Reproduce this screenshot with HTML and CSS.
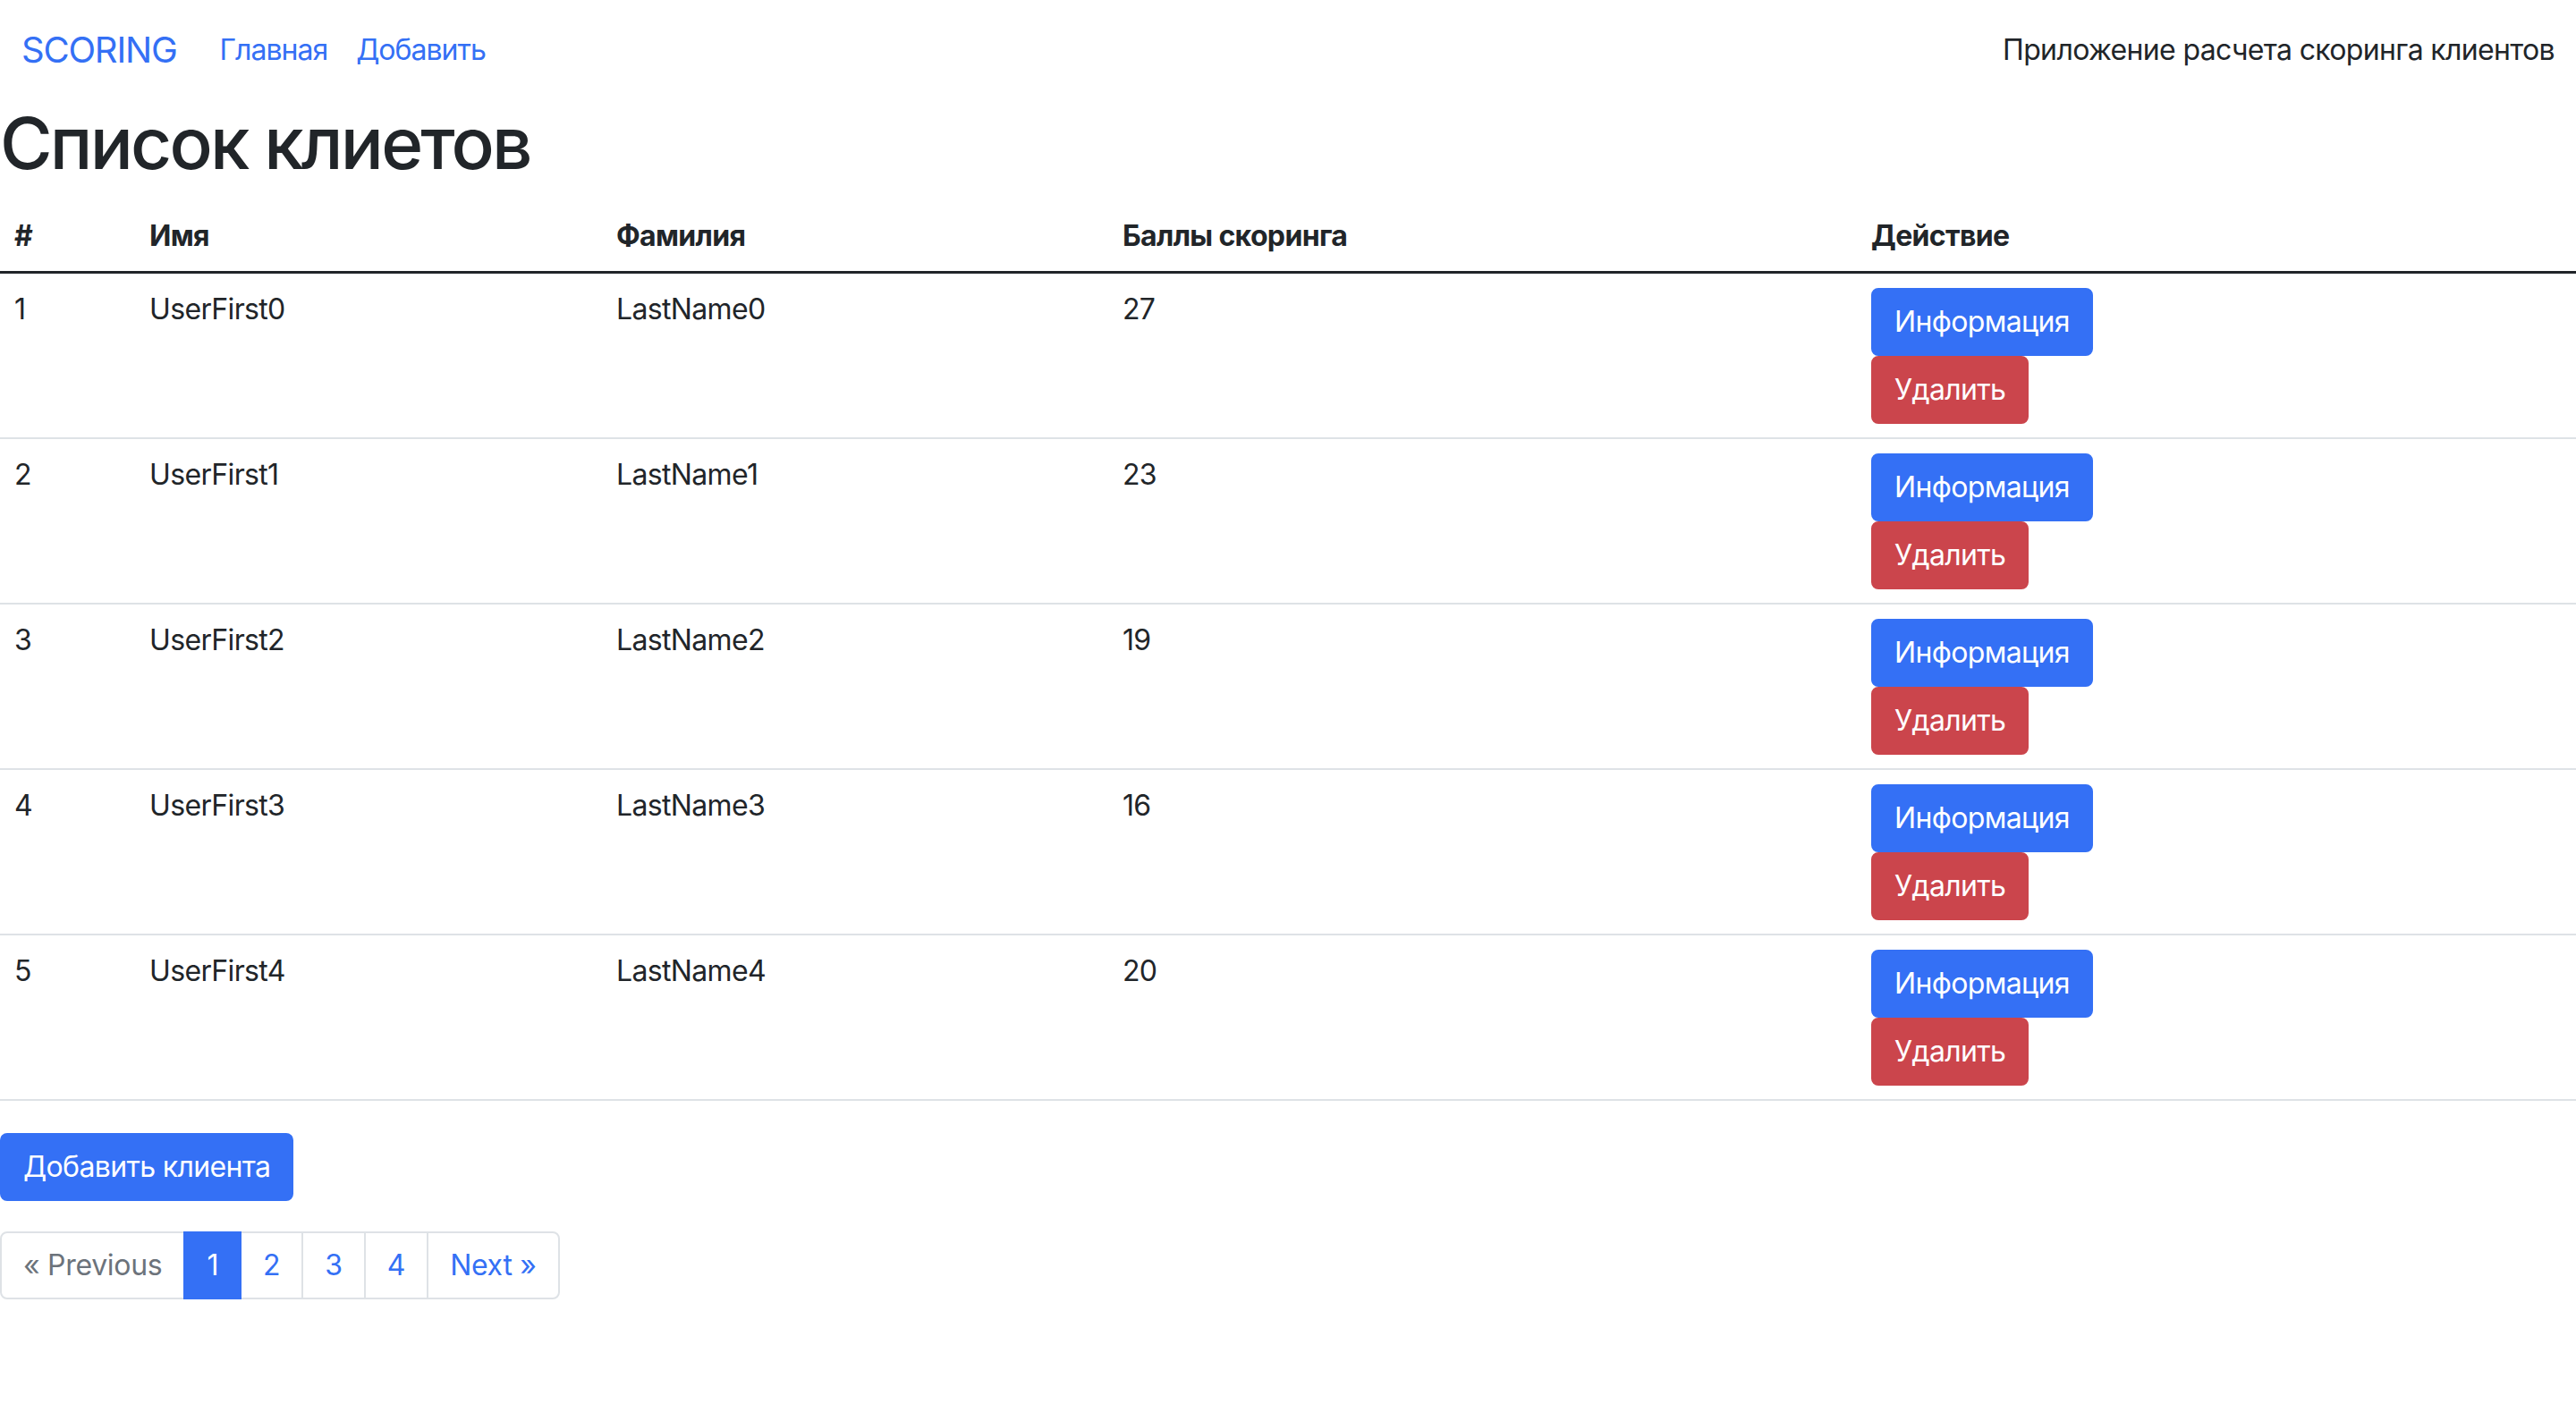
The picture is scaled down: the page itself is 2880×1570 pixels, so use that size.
FILE: index.html
```html
<!DOCTYPE html>
<html lang="ru">
<head>
<meta charset="utf-8">
<title>Scoring</title>
<link rel="stylesheet" href="styles.css">
</head>
<body>
<nav class="navbar">
  <div class="navbar-inner">
    <div class="navbar-left">
      <a class="brand" href="#">SCORING</a>
      <ul class="nav">
        <li><a class="nav-link" href="#">Главная</a></li>
        <li><a class="nav-link" href="#">Добавить</a></li>
      </ul>
    </div>
    <span class="navbar-text">Приложение расчета скоринга клиентов</span>
  </div>
</nav>

<h1 class="title">Список клиетов</h1>

<table class="table">
  <thead>
    <tr>
      <th class="col-num">#</th>
      <th class="col-first">Имя</th>
      <th class="col-last">Фамилия</th>
      <th class="col-score">Баллы скоринга</th>
      <th class="col-action">Действие</th>
    </tr>
  </thead>
  <tbody>
    <tr>
      <td>1</td><td>UserFirst0</td><td>LastName0</td><td>27</td>
      <td><div class="actions"><a class="btn btn-primary" href="#">Информация</a><a class="btn btn-danger" href="#">Удалить</a></div></td>
    </tr>
    <tr>
      <td>2</td><td>UserFirst1</td><td>LastName1</td><td>23</td>
      <td><div class="actions"><a class="btn btn-primary" href="#">Информация</a><a class="btn btn-danger" href="#">Удалить</a></div></td>
    </tr>
    <tr>
      <td>3</td><td>UserFirst2</td><td>LastName2</td><td>19</td>
      <td><div class="actions"><a class="btn btn-primary" href="#">Информация</a><a class="btn btn-danger" href="#">Удалить</a></div></td>
    </tr>
    <tr>
      <td>4</td><td>UserFirst3</td><td>LastName3</td><td>16</td>
      <td><div class="actions"><a class="btn btn-primary" href="#">Информация</a><a class="btn btn-danger" href="#">Удалить</a></div></td>
    </tr>
    <tr>
      <td>5</td><td>UserFirst4</td><td>LastName4</td><td>20</td>
      <td><div class="actions"><a class="btn btn-primary" href="#">Информация</a><a class="btn btn-danger" href="#">Удалить</a></div></td>
    </tr>
  </tbody>
</table>

<div class="add-row"><a class="btn btn-primary" href="#">Добавить клиента</a></div>

<ul class="pagination">
  <li class="page-item disabled"><span class="page-link">« Previous</span></li>
  <li class="page-item active"><span class="page-link">1</span></li>
  <li class="page-item"><a class="page-link" href="#">2</a></li>
  <li class="page-item"><a class="page-link" href="#">3</a></li>
  <li class="page-item"><a class="page-link" href="#">4</a></li>
  <li class="page-item"><a class="page-link" href="#">Next »</a></li>
</ul>
</body>
</html>
```

FILE: styles.css
```css
* { box-sizing: border-box; }

html, body {
  margin: 0;
  padding: 0;
  background: #ffffff;
}

body {
  font-family: "Inter", "Liberation Sans", sans-serif;
  font-size: 32px;
  line-height: 48px;
  letter-spacing: -0.65px;
  color: #212529;
}

a { text-decoration: none; }

/* Navbar */
.navbar {
  padding: 16px 0;
}
.navbar-inner {
  display: flex;
  align-items: center;
  justify-content: space-between;
  padding: 0 24px;
}
.navbar-left {
  display: flex;
  align-items: center;
}
.brand {
  font-size: 40px;
  line-height: 60px;
  padding: 10px 0;
  margin-right: 32px;
  letter-spacing: -1.2px;
  color: #3470f5;
}
.nav {
  display: flex;
  list-style: none;
  margin: 0;
  padding: 0;
}
.nav-link {
  display: block;
  padding: 16px 16px;
  letter-spacing: -1px;
  color: #3470f5;
}
.navbar-text {
  color: #212529;
  padding: 16px 0;
}

/* Title */
.title {
  font-size: 80px;
  font-weight: 500;
  line-height: 96px;
  margin: 0 0 16px;
  letter-spacing: -2.8px;
}

/* Table */
.table {
  width: 100%;
  border-collapse: collapse;
  margin-bottom: 36px;
  table-layout: fixed;
}
.table th,
.table td {
  padding: 16px 16px 15px;
  text-align: left;
  vertical-align: top;
  border-bottom: 2px solid #dee2e6;
}
.table th {
  font-weight: 700;
  padding-top: 16px;
  border-bottom: 3px solid #212529;
}
.col-num { width: 151px; }
.col-first { width: 522px; }
.col-last { width: 566px; }
.col-score { width: 837px; }

.actions {
  display: flex;
  flex-direction: column;
  align-items: flex-start;
}

/* Buttons */
.btn {
  display: inline-block;
  padding: 12px 24px;
  font-size: 32px;
  line-height: 48px;
  border: 2px solid transparent;
  border-radius: 8px;
  color: #ffffff;
}
.btn-primary {
  background: #3470f5;
  border-color: #3470f5;
}
.btn-danger {
  background: #cb454c;
  border-color: #cb454c;
}

.add-row {
  margin-bottom: 34px;
}

/* Pagination */
.pagination {
  display: flex;
  list-style: none;
  margin: 0;
  padding: 0;
  letter-spacing: -0.3px;
}
.page-link {
  display: block;
  position: relative;
  padding: 12px 24px;
  line-height: 48px;
  border: 2px solid #dee2e6;
  color: #3470f5;
  background: #ffffff;
}
.page-item + .page-item .page-link {
  margin-left: -2px;
}
.page-item:first-child .page-link {
  border-radius: 8px 0 0 8px;
}
.page-item:last-child .page-link {
  border-radius: 0 8px 8px 0;
}
.page-item.active .page-link {
  z-index: 2;
  background: #3470f5;
  border-color: #3470f5;
  color: #ffffff;
}
.page-item.disabled .page-link {
  color: #6c737b;
}
```
